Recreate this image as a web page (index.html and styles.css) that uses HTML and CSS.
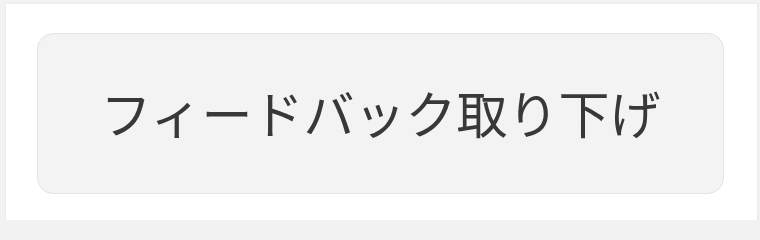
FILE: index.html
```html
<!DOCTYPE html>
<html lang="ja">
<head>
<meta charset="utf-8">
<link rel="stylesheet" href="styles.css">
</head>
<body>
<div class="panel">
  <button class="btn" type="button">フィードバック取り下げ</button>
</div>
</body>
</html>
```
FILE: styles.css
```css
html, body {
  margin: 0;
  padding: 0;
  background: #f2f2f2;
  width: 760px;
  height: 220px;
  overflow: hidden;
}
body {
  padding: 4px 3px 0 6px;
  box-sizing: border-box;
  font-family: "Noto Sans CJK JP", "Noto Sans", sans-serif;
}
.panel {
  background: #ffffff;
  height: 216px;
  box-shadow: 0 0 2px rgba(0,0,0,0.08);
  padding: 29px 33px 0 31px;
  box-sizing: border-box;
}
.btn {
  display: flex;
  align-items: center;
  justify-content: center;
  width: 100%;
  height: 161px;
  background: #f3f3f3;
  border: 1.5px solid #e4e4e4;
  border-radius: 16px;
  font-family: inherit;
  font-size: 51px;
  color: #383838;
  padding: 0 0 3px 0;
  margin: 0;
  line-height: 1;
}
```
